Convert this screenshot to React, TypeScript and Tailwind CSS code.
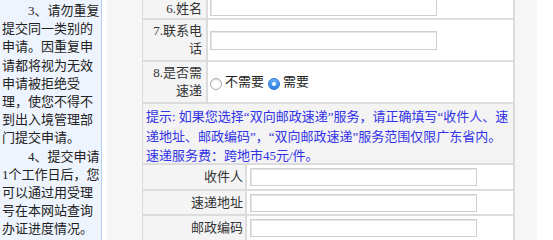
import React from 'react';

const font = "font-['Liberation_Serif','Noto_Sans_CJK_SC',serif]";

function TextBox({ w = 'w-[227px]', h = 'h-[19px]' }: { w?: string; h?: string }) {
  return (
    <div
      className={`${w} ${h} bg-white border border-[#cfcfcf] shadow-[inset_1px_1px_0_#e6e6e6]`}
    />
  );
}

function Radio({ checked }: { checked?: boolean }) {
  if (checked) {
    return (
      <span className="mt-[3px] w-[12px] h-[12px] rounded-full bg-gradient-to-b from-[#6aaef7] to-[#2a7fe6] border border-[#2b73d4] flex items-center justify-center">
        <span className="w-[4px] h-[4px] rounded-full bg-white" />
      </span>
    );
  }
  return (
    <span className="mt-[3px] w-[12px] h-[12px] rounded-full bg-white border border-[#a9a9a9] shadow-[inset_0_1px_1px_#ddd]" />
  );
}

export default function App() {
  return (
    <div className={`flex w-[553px] h-[240px] overflow-hidden bg-white text-[13px] ${font}`}>
      {/* left notice column */}
      <aside className="w-[102px] shrink-0 bg-[#eef4fd] border-r border-[#b6cff0] pl-[2px] pt-[2px] leading-[18.2px] text-[#222]">
        <p className="indent-[2em]">
          3、请勿重复提交同一类别的申请。因重复申请都将视为无效申请被拒绝受理，使您不得不到出入境管理部门提交申请。
        </p>
        <p className="indent-[2em]">
          4、提交申请1个工作日后，您可以通过用受理号在本网站查询办证进度情况。
        </p>
      </aside>

      <div className="w-[5px] shrink-0" />

      {/* form area */}
      <main className="w-[430px] shrink-0 bg-[#f6f6f6] pl-[35px] pr-[22px]">
        <div className="w-[373px] border-l border-r-2 border-[#dadada] text-[#333]">
          {/* 6 */}
          <div className="flex h-[28px] -mt-[8px] border-b-2 border-[#dcdcdc]">
            <div className="w-[65px] shrink-0 bg-[#f4f4f4] border-r-2 border-[#dcdcdc] pr-[4px] pt-[8px] text-right leading-[18px]">
              6.姓名
            </div>
            <div className="flex-1 bg-white pl-[2px] pt-[5px]">
              <TextBox />
            </div>
          </div>

          {/* 7 */}
          <div className="flex h-[42px] border-b-2 border-[#dcdcdc]">
            <div className="w-[65px] shrink-0 bg-[#f4f4f4] border-r-2 border-[#dcdcdc] pl-[4px] pr-[4px] flex flex-col justify-center text-right leading-[18px]">
              <span>7.联系电</span>
              <span>话</span>
            </div>
            <div className="flex-1 bg-white pl-[2px] flex items-center">
              <TextBox />
            </div>
          </div>

          {/* 8 */}
          <div className="flex h-[42px] border-b-2 border-[#dcdcdc]">
            <div className="w-[65px] shrink-0 bg-[#f4f4f4] border-r-2 border-[#dcdcdc] pl-[4px] pr-[4px] flex flex-col justify-center text-right leading-[18px]">
              <span>8.是否需</span>
              <span>速递</span>
            </div>
            <div className="flex-1 bg-white pl-[2px] flex items-center text-[#222]">
              <Radio />
              <span className="ml-[3px]">不需要</span>
              <span className="ml-[4px] flex">
                <Radio checked />
              </span>
              <span className="ml-[3px]">需要</span>
            </div>
          </div>

          {/* tip */}
          <div className="h-[59px] bg-[#f3f3f3] pl-[3px] pt-[3px] leading-[19.5px] text-[#3232e6] whitespace-nowrap">
            <div>提示: 如果您选择“双向邮政速递”服务，请正确填写“收件人、速</div>
            <div>递地址、邮政编码”，“双向邮政速递”服务范围仅限广东省内。</div>
            <div>速递服务费：跨地市45元/件。</div>
          </div>

          {/* delivery sub fields */}
          {['收件人', '速递地址', '邮政编码'].map((label, i) => (
            <div
              key={label}
              className={`flex border-t-2 border-[#dcdcdc] ${i === 1 ? 'h-[25px]' : 'h-[26px]'}`}
            >
              <div className="w-[104px] shrink-0 bg-[#f4f4f4] border-r-2 border-[#dcdcdc] pr-[2px] flex items-center justify-end">
                {label}
              </div>
              <div className="flex-1 bg-white pl-[3px] flex items-center">
                <TextBox h="h-[18px]" />
              </div>
            </div>
          ))}
        </div>
      </main>
    </div>
  );
}
